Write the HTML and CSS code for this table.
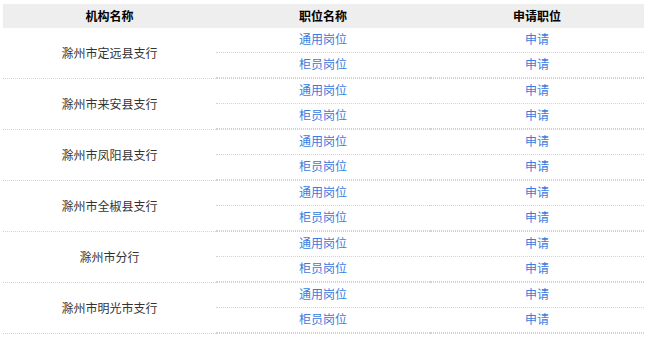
FILE: index.html
```html
<!DOCTYPE html>
<html lang="zh-CN">
<head>
<meta charset="utf-8">
<title>岗位列表</title>
<link rel="stylesheet" href="styles.css">
</head>
<body>
<div class="wrap">
  <div class="head">
    <div class="hcell">机构名称</div>
    <div class="hcell">职位名称</div>
    <div class="hcell">申请职位</div>
  </div>
  <div class="group">
    <div class="org">滁州市定远县支行</div>
    <div class="col"><a class="item">通用岗位</a><a class="item">柜员岗位</a></div>
    <div class="col"><a class="item">申请</a><a class="item">申请</a></div>
  </div>
  <div class="group">
    <div class="org">滁州市来安县支行</div>
    <div class="col"><a class="item">通用岗位</a><a class="item">柜员岗位</a></div>
    <div class="col"><a class="item">申请</a><a class="item">申请</a></div>
  </div>
  <div class="group">
    <div class="org">滁州市凤阳县支行</div>
    <div class="col"><a class="item">通用岗位</a><a class="item">柜员岗位</a></div>
    <div class="col"><a class="item">申请</a><a class="item">申请</a></div>
  </div>
  <div class="group">
    <div class="org">滁州市全椒县支行</div>
    <div class="col"><a class="item">通用岗位</a><a class="item">柜员岗位</a></div>
    <div class="col"><a class="item">申请</a><a class="item">申请</a></div>
  </div>
  <div class="group">
    <div class="org">滁州市分行</div>
    <div class="col"><a class="item">通用岗位</a><a class="item">柜员岗位</a></div>
    <div class="col"><a class="item">申请</a><a class="item">申请</a></div>
  </div>
  <div class="group">
    <div class="org">滁州市明光市支行</div>
    <div class="col"><a class="item">通用岗位</a><a class="item">柜员岗位</a></div>
    <div class="col"><a class="item">申请</a><a class="item">申请</a></div>
  </div>
</div>
</body>
</html>
```
FILE: styles.css
```css
html, body {
  margin: 0;
  padding: 0;
  background: #fff;
}
.wrap {
  width: 641px;
  padding: 4px 3px;
  font-family: "Noto Sans CJK SC", "Noto Sans", sans-serif;
  font-size: 12px;
  color: #333;
}
.head {
  display: grid;
  grid-template-columns: 213px 214px 214px;
  background: #eeeeee;
  height: 24px;
}
.hcell {
  text-align: center;
  line-height: 24px;
  font-weight: bold;
  color: #000;
}
.group {
  display: grid;
  grid-template-columns: 213px 214px 214px;
}
.org {
  height: 48px;
  padding-bottom: 2px;
  border-bottom: 1px dotted #d2d2d2;
  display: flex;
  align-items: center;
  justify-content: center;
  color: #333;
}
.col {
  display: flex;
  flex-direction: column;
  border-bottom: 1px dotted #d2d2d2;
}
.item {
  display: block;
  height: 24px;
  line-height: 22px;
  text-align: center;
  color: #3a7be0;
  border-bottom: 1px dotted #d2d2d2;
  text-decoration: none;
}
```
